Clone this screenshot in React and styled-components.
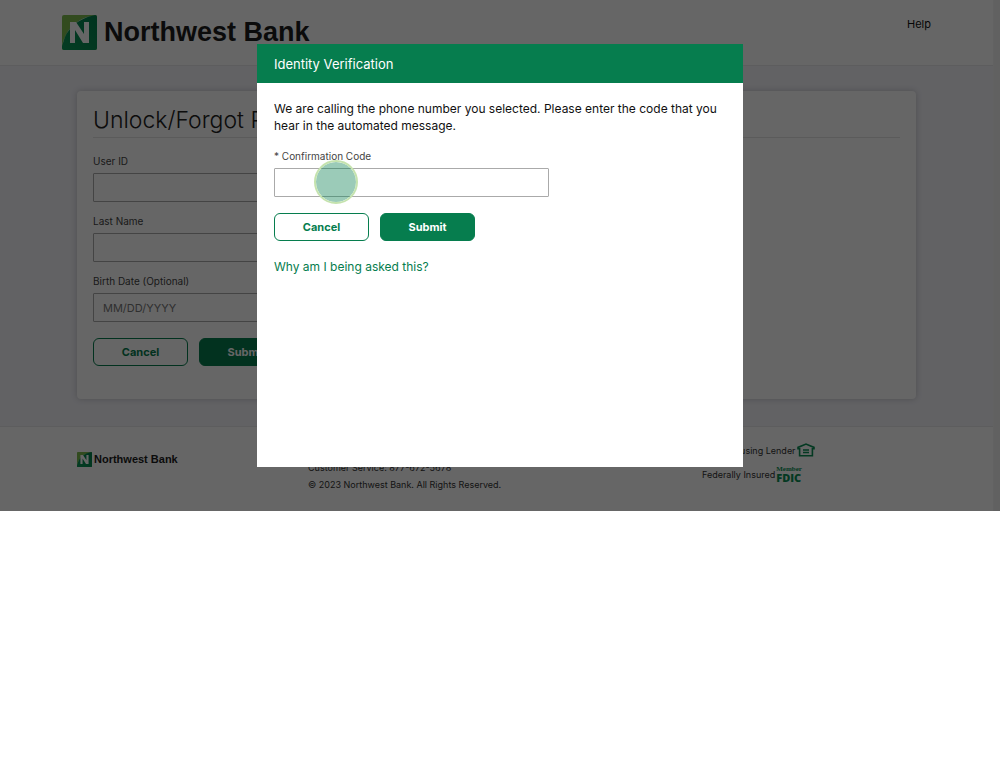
import React from "react";
import styled, { createGlobalStyle } from "styled-components";

const green = "#067d4e";
const badgeGreen = "#0a8f55";

const GlobalStyle = createGlobalStyle`
  * { box-sizing: border-box; }
  body { margin: 0; background: #fff; }
  body, button, input {
    font-family: Inter, "Liberation Sans", sans-serif;
  }
`;

const Stage = styled.div`
  position: relative;
  display: grid;
  grid-template-columns: 1fr 7px;
  background: #fff;
  overflow: hidden;
`;

const Page = styled.div`
  min-width: 0;
`;

const ScrollTrack = styled.div`
  background: #f2f2f2;
  border-left: 1px solid #f5f5f5;
`;

const Header = styled.header`
  display: flex;
  justify-content: space-between;
  align-items: flex-start;
  height: 66px;
  padding: 14px 62px 0;
  border-bottom: 1px solid #e8e8ec;
`;

const Brand = styled.div`
  display: flex;
  align-items: center;
  gap: ${(p) => (p.$small ? 2 : 7)}px;
  color: #1c1c1c;
  font-family: "Liberation Sans", sans-serif;
  font-weight: 700;
  font-size: ${(p) => (p.$small ? 11 : 27)}px;
  line-height: ${(p) => (p.$small ? 16 : 37)}px;
  white-space: nowrap;
`;

const HelpLink = styled.a`
  color: #111;
  font-size: 11px;
  line-height: 20px;
  text-decoration: none;
`;

const Main = styled.main`
  padding: 25px 77px 27px;
  background: #f4f4fa;
`;

const Card = styled.section`
  min-height: 308px;
  padding: 16px;
  border-radius: 4px;
  background: #fff;
  box-shadow: 0 0 6px rgba(0, 0, 0, 0.2);
`;

const Heading = styled.h1`
  margin: 0 0 16px;
  padding-bottom: 4px;
  border-bottom: 1px solid #e4e4e4;
  color: #222;
  font-weight: 300;
  font-size: 23px;
  line-height: 26px;
`;

const FormFields = styled.div`
  display: flex;
  flex-direction: column;
  gap: 12px;
  margin-bottom: 16px;
`;

const Field = styled.div`
  display: flex;
  flex-direction: column;
  gap: 4px;
  width: 275px;
`;

const Label = styled.label`
  color: #444;
  font-size: 10px;
  line-height: 15px;
`;

const TextInput = styled.input`
  width: 100%;
  height: 29px;
  padding: 0 9px;
  border: 1px solid #aaa;
  border-radius: 1px;
  background: #fff;
  font-size: 11px;
  &::placeholder { color: #777; opacity: 1; }
`;

const Actions = styled.div`
  display: flex;
  gap: 11px;
`;

const Button = styled.button`
  width: 95px;
  height: 28px;
  padding: 0;
  border: 1px solid ${green};
  border-radius: 6px;
  background: ${(p) => (p.$primary ? green : "#fff")};
  color: ${(p) => (p.$primary ? "#fff" : green)};
  font-weight: 700;
  font-size: 11px;
`;

const Footer = styled.footer`
  display: grid;
  grid-template-columns: 231fr 394fr 214fr;
  height: 85px;
  padding: 11px 77px 0;
  border-top: 1px solid #e8e8ec;
  color: #333;
  font-size: 9px;
  white-space: nowrap;
`;

const FooterBrand = styled.div`
  padding-top: 13px;
`;

const FooterText = styled.p`
  margin: 0;
  padding-top: 21px;
  line-height: 17px;
`;

const Badges = styled.div`
  display: flex;
  flex-direction: column;
`;

const Badge = styled.div`
  display: flex;
  align-items: center;
  gap: 1px;
  height: 24px;
`;

const Member = styled.div`
  display: flex;
  flex-direction: column;
  color: ${badgeGreen};
  font-family: "Liberation Serif", serif;
  font-weight: 700;
  font-size: 7px;
  line-height: 7px;
`;

const Fdic = styled.strong`
  font-family: "Open Sans", sans-serif;
  font-weight: 800;
  font-size: 11px;
  line-height: 9px;
`;

const Backdrop = styled.div`
  position: absolute;
  inset: 0;
  display: flex;
  justify-content: center;
  align-items: flex-start;
  padding-top: 44px;
  background: rgba(0, 0, 0, 0.6);
`;

const Dialog = styled.div`
  width: 486px;
  max-width: 100%;
  min-height: 423px;
  background: #fff;
`;

const DialogTitle = styled.h2`
  margin: 0;
  padding: 1px 17px 0;
  background: ${green};
  color: #fff;
  font-weight: 400;
  font-size: 13px;
  line-height: 38px;
`;

const DialogBody = styled.div`
  padding: 17px;
`;

const Message = styled.p`
  margin: 0 0 15px;
  color: #111;
  font-size: 12px;
  line-height: 17px;
`;

const CodeField = styled(Field)`
  position: relative;
  margin-bottom: 16px;
`;

const TapMarker = styled.span`
  position: absolute;
  left: 40px;
  top: 11px;
  width: 44px;
  height: 44px;
  border: 2px solid #c5e3ae;
  border-radius: 50%;
  background: rgba(6, 125, 78, 0.4);
  background-clip: padding-box;
  pointer-events: none;
`;

const WhyLink = styled.a`
  display: inline-block;
  margin-top: 17px;
  color: ${green};
  font-size: 12px;
  line-height: 18px;
  text-decoration: none;
`;

function Logo({ size, id }) {
  return (
    <svg width={size} height={size} viewBox="0 0 35 35" aria-hidden="true">
      <defs>
        <linearGradient id={id} x1="1" y1="0" x2="0" y2="1">
          <stop offset="0" stopColor="#007f4c" />
          <stop offset="1" stopColor="#0c9858" />
        </linearGradient>
      </defs>
      <rect width="35" height="35" rx="2" fill="#7dbb4e" />
      <path d="M35 2V33Q35 35 33 35H2Q0 35 0 33V31C3 15 14 3 33 0Q35 0 35 2Z" fill={`url(#${id})`} />
      <path d="M0 31C3 15 14 3 33 0C17 3 5 14 2 25Z" fill="#dcefd0" />
      <path d="M8 28V7h6l8 12V7h5v21h-6l-8-13v13Z" fill="#fff" />
    </svg>
  );
}

function HousingIcon() {
  return (
    <svg width="18" height="14" viewBox="0 0 18 14" fill="none" stroke={badgeGreen} aria-hidden="true">
      <path d="M1 5.8V4.4L9 1l8 3.4v1.4h-1.6v7H2.6v-7Z" strokeWidth="1.6" />
      <path d="M6 7h6M6 9.5h6" strokeWidth="1.3" />
    </svg>
  );
}

export default function App() {
  return (
    <>
      <GlobalStyle />
      <Stage>
        <Page>
          <Header>
            <Brand><Logo size={35} id="logo-header" />Northwest Bank</Brand>
            <HelpLink href="#help">Help</HelpLink>
          </Header>
          <Main>
            <Card>
              <Heading>Unlock/Forgot Password</Heading>
              <FormFields>
                <Field>
                  <Label htmlFor="user-id">User ID</Label>
                  <TextInput id="user-id" />
                </Field>
                <Field>
                  <Label htmlFor="last-name">Last Name</Label>
                  <TextInput id="last-name" />
                </Field>
                <Field>
                  <Label htmlFor="birth-date">Birth Date (Optional)</Label>
                  <TextInput id="birth-date" placeholder="MM/DD/YYYY" />
                </Field>
              </FormFields>
              <Actions>
                <Button type="button">Cancel</Button>
                <Button type="button" $primary>Submit</Button>
              </Actions>
            </Card>
          </Main>
          <Footer>
            <FooterBrand>
              <Brand $small><Logo size={15} id="logo-footer" />Northwest Bank</Brand>
            </FooterBrand>
            <FooterText>
              Customer Service: 877-672-5678<br />
              © 2023 Northwest Bank. All Rights Reserved.
            </FooterText>
            <Badges>
              <Badge>Equal Housing Lender <HousingIcon /></Badge>
              <Badge>Federally Insured <Member>Member<Fdic>FDIC</Fdic></Member></Badge>
            </Badges>
          </Footer>
        </Page>
        <ScrollTrack />
        <Backdrop>
          <Dialog role="dialog" aria-modal="true" aria-labelledby="dialog-title">
            <DialogTitle id="dialog-title">Identity Verification</DialogTitle>
            <DialogBody>
              <Message>
                We are calling the phone number you selected. Please enter the code that you hear in the automated message.
              </Message>
              <CodeField>
                <Label htmlFor="code">* Confirmation Code</Label>
                <TextInput id="code" />
                <TapMarker />
              </CodeField>
              <Actions>
                <Button type="button">Cancel</Button>
                <Button type="button" $primary>Submit</Button>
              </Actions>
              <WhyLink href="#why">Why am I being asked this?</WhyLink>
            </DialogBody>
          </Dialog>
        </Backdrop>
      </Stage>
    </>
  );
}
